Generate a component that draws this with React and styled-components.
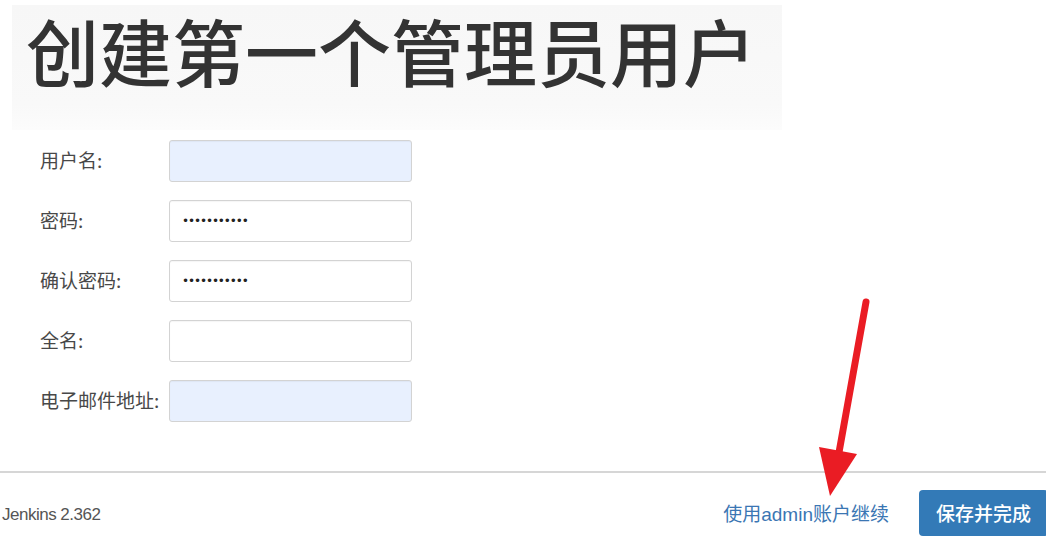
import React from 'react';
import styled, { createGlobalStyle } from 'styled-components';

const GlobalStyle = createGlobalStyle`
  html, body {
    margin: 0;
    padding: 0;
    background: #fff;
  }
  body {
    font-family: "Liberation Sans", "Noto Sans CJK SC", sans-serif;
    color: #333;
  }
`;

const fields = [
  { label: '用户名:', filled: true, value: '' },
  { label: '密码:', value: '•••••••••••', type: 'password' },
  { label: '确认密码:', value: '•••••••••••', type: 'password' },
  { label: '全名:', value: '' },
  { label: '电子邮件地址:', filled: true, value: '' },
];

const App = () => (
  <Page>
    <GlobalStyle />
    <Header>
      <Title>创建第一个管理员用户</Title>
    </Header>

    <Form>
      {fields.map((field) => (
        <Row key={field.label}>
          <Label>{field.label}</Label>
          <Input $filled={field.filled}>
            {field.type === 'password' && <Dots>{field.value}</Dots>}
          </Input>
        </Row>
      ))}
    </Form>

    <Footer>
      <Version>Jenkins 2.362</Version>
      <Actions>
        <SkipLink>使用admin账户继续</SkipLink>
        <SaveButton>保存并完成</SaveButton>
      </Actions>
    </Footer>

    <Arrow viewBox="0 0 1046 536" aria-hidden="true">
      <line x1="866" y1="302" x2="838" y2="458" stroke="#ea1c24" strokeWidth="7" strokeLinecap="round" />
      <polygon points="819,447 857,454 830,496" fill="#ea1c24" />
    </Arrow>
  </Page>
);

const Page = styled.div`
  position: relative;
  width: 1046px;
  height: 536px;
  overflow: hidden;
  display: flex;
  flex-direction: column;
`;

const Header = styled.div`
  margin: 5px 0 0 12px;
  width: 770px;
  height: 125px;
  padding: 0 0 0 14px;
  box-sizing: border-box;
  background: linear-gradient(#f7f7f7, #f9f9f9 80%, #fcfcfc);
`;

const Title = styled.h1`
  display: inline-block;
  margin: 0;
  padding: 0 4px 4px 0;
  font-family: "Noto Sans CJK SC", sans-serif;
  font-size: 73px;
  line-height: 88px;
  font-weight: 500;
  color: #333;
  white-space: nowrap;
`;

const Form = styled.div`
  margin-top: 10px;
  padding-left: 40px;
  display: flex;
  flex-direction: column;
  gap: 18px;
`;

const Row = styled.div`
  display: flex;
  align-items: center;
  height: 42px;
`;

const Label = styled.span`
  width: 129px;
  flex-shrink: 0;
  font-family: "Noto Sans CJK SC", sans-serif;
  font-size: 19px;
  color: #484848;
  margin-top: -4px;
  white-space: nowrap;
`;

const Input = styled.div`
  width: 243px;
  height: 42px;
  box-sizing: border-box;
  border: 1px solid #d3d3d3;
  border-radius: 3px;
  background: ${(p) => (p.$filled ? '#e8f0fe' : '#fff')};
  box-shadow: inset 0 1px 1px rgba(0, 0, 0, 0.04);
  display: flex;
  align-items: center;
  padding: 0 12px;
`;

const Dots = styled.span`
  font-family: "DejaVu Sans", sans-serif;
  font-size: 12px;
  letter-spacing: -1.1px;
  color: #222;
`;

const Footer = styled.div`
  margin-top: 49px;
  border-top: 2px solid #d6d6d6;
  flex: 1;
  display: flex;
  justify-content: space-between;
  align-items: center;
  padding: 16px 0 0 2px;
`;

const Version = styled.span`
  font-family: "Liberation Sans", sans-serif;
  font-size: 17px;
  letter-spacing: -0.5px;
  color: #555;
  margin-top: 5px;
`;

const Actions = styled.div`
  display: flex;
  align-items: center;
  gap: 30px;
`;

const SkipLink = styled.a`
  font-family: "Liberation Sans", "Noto Sans CJK SC", sans-serif;
  font-size: 19px;
  color: #3b76b3;
  cursor: pointer;
`;

const SaveButton = styled.button`
  height: 46px;
  padding: 0 17px;
  border: none;
  border-radius: 4px;
  background: #337ab7;
  color: #fff;
  font-family: "Noto Sans CJK SC", sans-serif;
  font-size: 19px;
  font-weight: 500;
  margin-right: -2px;
  cursor: pointer;
`;

const Arrow = styled.svg`
  position: absolute;
  top: 0;
  left: 0;
  width: 1046px;
  height: 536px;
  pointer-events: none;
`;

export default App;
